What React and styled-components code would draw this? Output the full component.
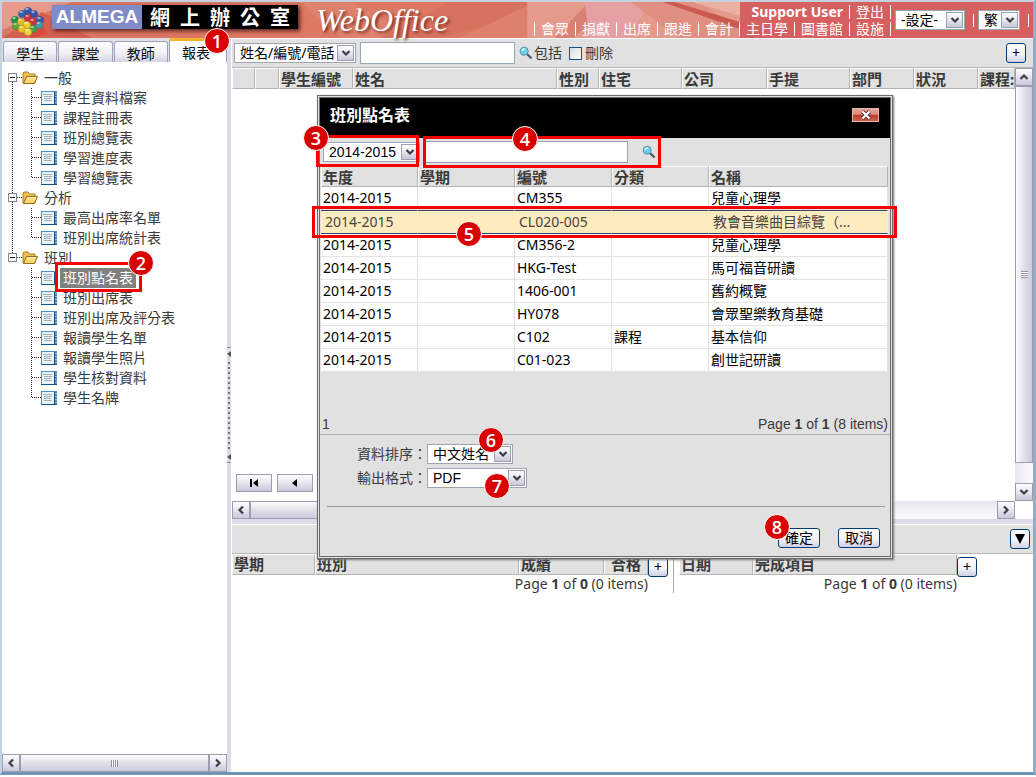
import styled, { createGlobalStyle, css } from "styled-components";

const students = ["", "", "學生編號", "姓名", "性別", "住宅", "公司", "手提", "部門", "狀況", "課程:"];
const studentCols = [23, 24, 74, 204, 42, 83, 85, 83, 64, 64];

const tree = [
  { title: "一般", items: ["學生資料檔案", "課程註冊表", "班別總覽表", "學習進度表", "學習總覽表"] },
  { title: "分析", items: ["最高出席率名單", "班別出席統計表"] },
  {
    title: "班別",
    items: ["班別點名表", "班別出席表", "班別出席及評分表", "報讀學生名單", "報讀學生照片", "學生核對資料", "學生名牌"],
  },
];

const classes = [
  { code: "CM355", type: "", name: "兒童心理學" },
  { code: "CL020-005", type: "", name: "教會音樂曲目綜覽（...", selected: true },
  { code: "CM356-2", type: "", name: "兒童心理學" },
  { code: "HKG-Test", type: "", name: "馬可福音研讀" },
  { code: "1406-001", type: "", name: "舊約概覽" },
  { code: "HY078", type: "", name: "會眾聖樂教育基礎" },
  { code: "C102", type: "課程", name: "基本信仰" },
  { code: "C01-023", type: "", name: "創世記研讀" },
];

function Logo() {
  const balls = [
    [26, 9, "#3b53a8"], [20, 12, "#2f63a8"], [32, 12, "#3b53a8"], [13, 18, "#2c8a49"],
    [38, 18, "#3f57b0"], [26, 16, "#d02e3c"], [14, 24, "#5aa83c"], [37, 23, "#3a9db0"],
    [19, 20, "#e0b92a"], [31, 20, "#c93742"], [25, 23, "#f0cf2a"], [20, 27, "#e8c321"], [31, 27, "#45a545"], [26, 30, "#efd23a"],
  ];
  return (
    <svg width="50" height="36" viewBox="0 0 50 36" aria-hidden="true">
      <path d="M24 30L40 22L46 32L30 36Z" fill="#d94b3c" />
      {balls.map(([x, y, fill]) => (
        <g key={`${x}-${y}`}>
          <circle cx={x} cy={y} r="3.8" fill={fill} stroke="#0003" strokeWidth="0.6" />
          <ellipse cx={x - 1} cy={y - 2} rx="1.8" ry="0.9" fill="#fff8" />
        </g>
      ))}
    </svg>
  );
}

function BannerArt() {
  return (
    <Art viewBox="0 0 742 36" preserveAspectRatio="none" aria-hidden="true">
      <rect width="742" height="36" fill="#dc7863" />
      <path d="M0 0H70L0 28Z" fill="#e79a8c" />
      <path d="M0 36L40 10L90 36Z" fill="#d4604f" />
      <path d="M300 0H350L420 36H340Z" fill="#de826e" />
      <path d="M380 36L450 0H528V12L440 36Z" fill="#d8715f" />
      <path d="M460 36L528 4V36Z" fill="#dd806c" />
      <rect x="528" width="214" height="36" fill="#e59a8c" />
      <path d="M556 36L590 0H612L575 36Z" fill="#d98273" />
      <path d="M586 0H650L632 36H590Z" fill="#e6a0a4" />
      <path d="M632 0H700L742 28V36H680Z" fill="#e08f82" />
      <path d="M664 0H676L742 20V27Z" fill="#cb5a4e" />
      <path d="M694 0H742V14Z" fill="#eab0a2" />
    </Art>
  );
}

function Chevron({ dir = "down" }) {
  const turn = { down: 0, left: 90, up: 180, right: 270 }[dir];
  return (
    <svg width="10" height="10" viewBox="0 0 10 10" aria-hidden="true">
      <path d="M1.5 3L5 6.5L8.5 3" fill="none" stroke="#3c3c46" strokeWidth="2.2" transform={`rotate(${turn} 5 5)`} />
    </svg>
  );
}

function Magnifier() {
  return (
    <svg width="14" height="14" viewBox="0 0 14 14" aria-hidden="true">
      <path d="M8 8L12.5 12.5" stroke="#4d5a66" strokeWidth="2.2" />
      <circle cx="5.2" cy="5.2" r="4" fill="#6fd0ee" stroke="#4f8fa8" />
      <path d="M3 5A2.5 2.5 0 0 1 6 3" stroke="#e6fbff" strokeWidth="1.4" fill="none" />
    </svg>
  );
}

function Folder() {
  return (
    <svg width="16" height="14" viewBox="0 0 16 14" aria-hidden="true">
      <path d="M1 12V2L2 1H6L7.5 3H13V12Z" fill="#eec051" stroke="#a98022" />
      <path d="M1.5 12.5L4.5 5.5H15.5L12.5 12.5Z" fill="#fbd567" stroke="#8a6d26" />
      <path d="M5.2 6.5H14M4.5 8H13.5" stroke="#ffeaa0" />
    </svg>
  );
}

function Report() {
  return (
    <svg width="16" height="14" viewBox="0 0 16 14" aria-hidden="true">
      <rect x="0.5" y="0.5" width="15" height="13" fill="#4288bd" stroke="#4a90c8" />
      <rect x="1" y="1" width="12" height="12" fill="#eef3f6" />
      <path d="M2 3.5H11M3 5.5H11M3 7.5H10M3 9.5H11" stroke="#a3afb9" />
      <path d="M0 13.5H16M13.5 1V13" stroke="#16517f" />
      <path d="M15 2V12" stroke="#d9efff" strokeDasharray="1 2" />
    </svg>
  );
}

// dotted connector lines in front of a tree row
function Guides({ child, first, last, lastGroup }) {
  return (
    <svg width={child ? 39 : 20} height="20" aria-hidden="true">
      <g fill="none" stroke="#222" strokeDasharray="1 1">
        {child && !lastGroup && <path d="M10.5 0V20" />}
        {child && <path d={last ? "M29.5 0V10" : "M29.5 0V20"} />}
        {child && <path d="M30 9.5H39" />}
        {!child && !first && <path d="M10.5 0V5" />}
        {!child && !lastGroup && <path d="M10.5 14V20" />}
        {!child && <path d="M15 9.5H20" />}
      </g>
      {!child && (
        <>
          <rect x="6.5" y="5.5" width="8" height="8" fill="#fff" stroke="#858585" />
          <path d="M8 9.5H13" stroke="#111" />
        </>
      )}
    </svg>
  );
}

function Dropdown({ label, value, width, arial }) {
  return (
    <SelectBox $width={width}>
      <Select aria-label={label} defaultValue={value} $arial={arial}>
        <option>{value}</option>
      </Select>
      <SelectArrow aria-hidden="true">
        <Chevron />
      </SelectArrow>
    </SelectBox>
  );
}

function ScrollBar({ vertical, thumb, grip, label }) {
  return (
    <Track $vertical={vertical} aria-label={label} role="group">
      <ScrollButton aria-label="Back"><Chevron dir={vertical ? "up" : "left"} /></ScrollButton>
      <Rail $vertical={vertical}>
        <Thumb $vertical={vertical} $size={thumb}>{grip && <Grip $vertical={vertical} />}</Thumb>
      </Rail>
      <ScrollButton aria-label="Forward"><Chevron dir={vertical ? "down" : "right"} /></ScrollButton>
    </Track>
  );
}

function Sidebar() {
  return (
    <Side>
      <Tabs>
        <Tab>學生</Tab>
        <Tab>課堂</Tab>
        <Tab>教師</Tab>
        <Tab $active>
          報表
          <Badge $top={-13} $left={34}>1</Badge>
        </Tab>
      </Tabs>
      <Tree>
        {tree.map((group, g) => {
          const lastGroup = g === tree.length - 1;
          return (
            <li key={group.title}>
              <TreeRow>
                <Guides first={g === 0} lastGroup={lastGroup} />
                <Folder />
                <TreeLabel href="#">{group.title}</TreeLabel>
              </TreeRow>
              {group.items.map((item, i) => {
                const current = item === "班別點名表";
                return (
                  <TreeRow key={item}>
                    <Guides child last={i === group.items.length - 1} lastGroup={lastGroup} />
                    <Report />
                    <TreeLabel href="#" $current={current}>{item}</TreeLabel>
                    {current && (
                      <Frame $top={-6} $left={53} $width={87} $height={30}>
                        <Badge $top={-15} $left={70}>2</Badge>
                      </Frame>
                    )}
                  </TreeRow>
                );
              })}
            </li>
          );
        })}
      </Tree>
      <ScrollBar label="Reports scroll" thumb="100%" grip />
    </Side>
  );
}

function ClassDialog() {
  return (
    <Dialog role="dialog" aria-label="班別點名表">
      <DialogTitle>
        <h2>班別點名表</h2>
        <CloseButton aria-label="Close">
          <svg width="12" height="10" viewBox="0 0 12 10" aria-hidden="true">
            <path d="M2.5 1.5L9.5 8.5M9.5 1.5L2.5 8.5" stroke="#5b3030" strokeWidth="4" />
            <path d="M2.5 1.5L9.5 8.5M9.5 1.5L2.5 8.5" stroke="#fff" strokeWidth="2.2" />
          </svg>
        </CloseButton>
      </DialogTitle>
      <DialogFilter>
        <Dropdown label="年度" value="2014-2015" width={97} arial />
        <FilterInput aria-label="搜尋班別" />
        <IconButton aria-label="搜尋"><Magnifier /></IconButton>
        <Frame $top={-3} $left={-4} $width={103} $height={32}>
          <Badge $top={-13} $left={-16}>3</Badge>
        </Frame>
        <Frame $top={-2} $left={103} $width={238} $height={32}>
          <Badge $top={-13} $left={86}>4</Badge>
        </Frame>
      </DialogFilter>
      <GridHolder>
        <Grid>
          <colgroup>
            <Col $w={97} /><Col $w={97} /><Col $w={97} /><Col $w={97} /><col />
          </colgroup>
          <thead>
            <tr><Th>年度</Th><Th>學期</Th><Th>編號</Th><Th>分類</Th><Th>名稱</Th></tr>
          </thead>
          <tbody>
            {classes.map((row) => (
              <Row key={row.code} $selected={row.selected}>
                <td>2014-2015</td>
                <td />
                <td>{row.code}</td>
                <td>{row.type}</td>
                <td>{row.name}</td>
              </Row>
            ))}
          </tbody>
        </Grid>
        <Frame $top={40} $left={-8} $width={585} $height={32}>
          <Badge $top={12} $left={141}>5</Badge>
        </Frame>
      </GridHolder>
      <DialogPager>
        <span>1</span>
        <span>Page <b>1</b> of <b>1</b> (8 items)</span>
      </DialogPager>
      <Options>
        <Option>
          資料排序：
          <Anchor>
            <Dropdown label="資料排序" value="中文姓名" width={86} />
            <Badge $top={-17} $left={51}>6</Badge>
          </Anchor>
        </Option>
        <Option>
          輸出格式：
          <Anchor>
            <Dropdown label="輸出格式" value="PDF" width={100} arial />
            <Badge $top={5} $left={57}>7</Badge>
          </Anchor>
        </Option>
      </Options>
      <Actions>
        <PushButton>
          確定
          <Badge $top={-15} $left={-15}>8</Badge>
        </PushButton>
        <PushButton>取消</PushButton>
      </Actions>
    </Dialog>
  );
}

export default function App() {
  return (
    <Page>
      <GlobalStyle />
      <Header>
        <Banner>
          <BannerArt />
          <Logo />
          <Brand>
            <Almega>ALMEGA</Almega>
            <BrandName>{"網\u2002上\u2002辦\u2002公\u2002室"}</BrandName>
          </Brand>
          <Product>WebOffice</Product>
          <Nav>
            {["會眾", "捐獻", "出席", "跟進", "會計"].map((link) => (
              <BarLink href="#" key={link}>{link}</BarLink>
            ))}
          </Nav>
        </Banner>
        <Account>
          <AccountLinks>
            <p><BarLink href="#"><b>Support User</b></BarLink><BarLink href="#">登出</BarLink></p>
            <p><BarLink href="#">主日學</BarLink><BarLink href="#">圖書館</BarLink><BarLink href="#">設施</BarLink></p>
          </AccountLinks>
          <Dropdown label="設定" value="-設定-" width={70} />
          <Pipe />
          <Dropdown label="語言" value="繁" width={42} />
          <Pipe />
        </Account>
      </Header>

      <Main>
        <Sidebar />
        <Splitter>
          <svg width="4" height="116" viewBox="0 0 4 116" aria-hidden="true">
            <path d="M0 .5H4M0 115.5H4" stroke="#8a8a9a" />
            <path d="M4 4V10L0 7ZM4 107V113L0 110Z" fill="#555" />
            <path d="M2 15V102" stroke="#77778a" strokeWidth="2" strokeDasharray="2 3" />
          </svg>
        </Splitter>
        <Work>
          <Toolbar>
            <Dropdown label="搜尋欄位" value="姓名/編號/電話" width={122} />
            <SearchInput aria-label="搜尋" />
            <Magnifier />
            <span>包括</span>
            <Check>
              <input type="checkbox" />
              刪除
            </Check>
            <SquareButton aria-label="新增學生">+</SquareButton>
          </Toolbar>
          <Upper>
            <UpperBody>
              <UpperMain>
                <Grid>
                  <colgroup>
                    {studentCols.map((w, i) => <Col key={i} $w={w} />)}
                    <col />
                  </colgroup>
                  <thead>
                    <tr>{students.map((name, i) => <Th key={i}>{name}</Th>)}</tr>
                  </thead>
                </Grid>
                <RecordNav>
                  <NavButton aria-label="First">
                    <svg width="10" height="8" viewBox="0 0 10 8"><path d="M1 0H3V8H1ZM9 0V8L4 4Z" /></svg>
                  </NavButton>
                  <NavButton aria-label="Previous">
                    <svg width="10" height="8" viewBox="0 0 10 8"><path d="M7 0V8L2 4Z" /></svg>
                  </NavButton>
                </RecordNav>
              </UpperMain>
              <ScrollBar vertical label="Students scroll vertical" thumb="95%" grip />
            </UpperBody>
            <HorizontalScroll>
              <ScrollBar label="Students scroll" thumb="60%" />
            </HorizontalScroll>
          </Upper>
          <RowSplitter />
          <Lower>
            <LowerBar>
              <SquareButton aria-label="展開">
                <svg width="10" height="10" viewBox="0 0 10 10" aria-hidden="true"><path d="M0 0H10L5 10Z" /></svg>
              </SquareButton>
            </LowerBar>
            <Details>
              <Detail>
                <DetailGrid $width={416}>
                  <Grid>
                    <colgroup><Col $w={83} /><Col $w={204} /><Col $w={85} /><col /></colgroup>
                    <thead>
                      <tr><Th>學期</Th><Th>班別</Th><Th>成績</Th><Th $center>合格</Th></tr>
                    </thead>
                  </Grid>
                  <Pager>Page <b>1</b> of <b>0</b> (0 items)</Pager>
                </DetailGrid>
                <SquareButton aria-label="新增成績">+</SquareButton>
              </Detail>
              <Detail>
                <DetailGrid $width={278}>
                  <Grid>
                    <colgroup><Col $w={74} /><col /></colgroup>
                    <thead>
                      <tr><Th>日期</Th><Th>完成項目</Th></tr>
                    </thead>
                  </Grid>
                  <Pager>Page <b>1</b> of <b>0</b> (0 items)</Pager>
                </DetailGrid>
                <SquareButton aria-label="新增項目">+</SquareButton>
              </Detail>
            </Details>
          </Lower>
        </Work>
      </Main>
      <ClassDialog />
    </Page>
  );
}

const GlobalStyle = createGlobalStyle`
  * {
    box-sizing: border-box;
  }
  body {
    margin: 0;
    background: #fff;
  }
  body, button, input, select {
    font-family: "Noto Sans", "Noto Sans CJK TC", sans-serif;
    font-size: 14px;
    line-height: 20px;
    color: #3a3a3a;
  }
  h1, h2, p, ul {
    margin: 0;
    padding: 0;
  }
  svg {
    flex: none;
    display: block;
  }
`;

const Page = styled.div`
  position: relative;
  height: calc(100vh - 2px);
  min-height: 640px;
  display: flex;
  flex-direction: column;
  border: 2px solid #c3d2de;
  border-right: 3px solid #93aec4;
  border-bottom: 3px solid #7096b4;
  overflow: hidden;
`;

const Header = styled.header`
  display: flex;
  flex: none;
  height: 36px;
  color: #fff;
`;

const Banner = styled.div`
  position: relative;
  flex: 1;
  display: flex;
  align-items: center;
  min-width: 0;
  > * {
    position: relative;
  }
`;

const Art = styled.svg`
  && {
    position: absolute;
    inset: 0;
    width: 100%;
    height: 100%;
  }
`;

const Brand = styled.div`
  display: flex;
  align-self: flex-start;
  margin-top: 3px;
  height: 24px;
  line-height: 24px;
  box-shadow: 2px 2px 4px #5a2020;
`;

const Almega = styled.span`
  width: 90px;
  text-align: center;
  background: #7f8cc8;
  font-family: "Liberation Sans", Arial, sans-serif;
  font-size: 19px;
  font-weight: bold;
`;

const BrandName = styled.span`
  width: 156px;
  text-align: center;
  background: #000;
  font-family: "Noto Sans CJK TC", sans-serif;
  font-size: 20px;
  font-weight: bold;
  white-space: pre;
`;

const Product = styled.h1`
  margin-left: 18px;
  font-family: "Liberation Serif", "Times New Roman", serif;
  font-size: 32px;
  line-height: 36px;
  font-style: italic;
  font-weight: normal;
  text-shadow: 2px 2px 3px #7a3025;
`;

const BarLink = styled.a`
  padding: 0 6px;
  border-right: 1px solid #fff;
  color: #fff;
  text-decoration: none;
`;

const Nav = styled.nav`
  display: flex;
  align-self: flex-end;
  margin: 0 0 2px auto;
  line-height: 14px;
  white-space: nowrap;
  border-left: 1px solid #fff;
`;

const Account = styled.div`
  display: flex;
  flex: none;
  align-items: center;
  background: #d66060;
`;

const AccountLinks = styled.div`
  display: flex;
  flex-direction: column;
  gap: 3px;
  margin-right: 4px;
  line-height: 14px;
  p {
    display: flex;
    justify-content: flex-end;
  }
`;

const Pipe = styled.span`
  height: 13px;
  margin: 0 4px 0 8px;
  border-left: 1px solid #fff;
`;

const SelectBox = styled.span`
  display: flex;
  flex: none;
  width: ${({ $width }) => $width}px;
  height: 20px;
  padding: 1px;
  border: 1px solid #9da4b2;
  background: #fff;
`;

const Select = styled.select`
  appearance: none;
  flex: 1;
  min-width: 0;
  padding: 0 0 0 4px;
  border: none;
  background: none;
  line-height: 16px;
  color: #000;
  ${({ $arial }) => $arial && css`
    font-family: "Liberation Sans", Arial, sans-serif;
  `}
`;

const face = css`
  display: flex;
  align-items: center;
  justify-content: center;
  padding: 0;
  border: 1px solid #9b9db0;
  background: linear-gradient(#fdfdff, #e8e8f0 45%, #c8c8da);
`;

const SelectArrow = styled.span`
  ${face}
  width: 17px;
  flex: none;
  pointer-events: none;
`;

const ScrollButton = styled.button`
  ${face}
  width: 18px;
  height: 18px;
  flex: none;
`;

const Track = styled.div`
  display: flex;
  flex: none;
  flex-direction: ${({ $vertical }) => ($vertical ? "column" : "row")};
`;

const Rail = styled.div`
  flex: 1;
  display: flex;
  min-width: 0;
  min-height: 0;
  flex-direction: ${({ $vertical }) => ($vertical ? "column" : "row")};
  background: linear-gradient(${({ $vertical }) => ($vertical ? "90deg" : "180deg")}, #e7e7ef, #fbfbfe);
`;

const Thumb = styled.div`
  display: flex;
  align-items: center;
  justify-content: center;
  flex: 0 0 ${({ $size }) => $size};
  border: 1px solid #9b9db0;
  background: linear-gradient(${({ $vertical }) => ($vertical ? "90deg" : "180deg")}, #fbfbfd, #dcdce6 60%, #c9c9db);
`;

const Grip = styled.span`
  width: 7px;
  height: 7px;
  background: repeating-linear-gradient(
    ${({ $vertical }) => ($vertical ? "180deg" : "90deg")},
    #8c93a6 0 1px,
    #fff 1px 2px
  );
`;

const Main = styled.main`
  flex: 1;
  display: flex;
  min-height: 0;
`;

const Side = styled.aside`
  flex: none;
  width: 225px;
  display: flex;
  flex-direction: column;
`;

const Tabs = styled.div`
  display: flex;
  align-items: flex-end;
  gap: 1px;
  height: 24px;
  padding-left: 1px;
  background: #e1e1e1;
  margin-bottom: 6px;
`;

const Tab = styled.button`
  position: relative;
  flex: 1;
  height: 21px;
  padding: 3px 0 0;
  border: 1px solid #9a9fc0;
  border-bottom: none;
  border-radius: 3px 3px 0 0;
  background: linear-gradient(#fff, #f0f0f6 55%, #d3d3e2);
  line-height: 18px;
  color: #111;
  ${({ $active }) => $active && css`
    flex: 0 0 58px;
    height: 24px;
    padding-right: 4px;
    border-top: 3px solid #f5b12e;
    background: #fff;
  `}
`;

const Tree = styled.ul`
  flex: 1;
  min-height: 0;
  overflow: hidden;
  list-style: none;
`;

const TreeRow = styled.div`
  position: relative;
  display: flex;
  align-items: center;
  height: 20px;
`;

const TreeLabel = styled.a`
  margin-left: 3px;
  padding: 0 3px;
  line-height: 20px;
  color: #3a3a3a;
  text-decoration: none;
  ${({ $current }) => $current && css`
    color: #fff;
    background: #808080;
  `}
`;

const Frame = styled.div`
  position: absolute;
  z-index: 2;
  top: ${({ $top }) => $top}px;
  left: ${({ $left }) => $left}px;
  width: ${({ $width }) => $width}px;
  height: ${({ $height }) => $height}px;
  border: 3px solid #f80000;
  pointer-events: none;
`;

const Badge = styled.span`
  position: absolute;
  z-index: 3;
  top: ${({ $top }) => $top}px;
  left: ${({ $left }) => $left}px;
  width: 26px;
  height: 26px;
  border: 1px solid #fff;
  border-radius: 50%;
  background: #d80000;
  color: #fff;
  font-family: "Open Sans", sans-serif;
  font-size: 18px;
  font-weight: 600;
  line-height: 24px;
  text-align: center;
`;

const Splitter = styled.div`
  flex: none;
  width: 4px;
  display: flex;
  align-items: center;
  justify-content: center;
  background: #dcdce9;
`;

const Work = styled.section`
  flex: 1;
  min-width: 0;
  display: flex;
  flex-direction: column;
  padding-left: 1px;
`;

const Toolbar = styled.div`
  display: flex;
  align-items: center;
  flex: none;
  height: 30px;
  padding: 0 7px 0 2px;
  border-top: 1px solid #fff;
  border-bottom: 1px solid #b5b5b5;
  background: #e1e1e1;
  > svg {
    margin: 0 1px 0 4px;
  }
  > button {
    margin-left: auto;
  }
`;

const field = css`
  height: 22px;
  padding: 0 4px;
  border: 1px solid #9aa7b4;
  background: #fff;
`;

const SearchInput = styled.input`
  ${field}
  width: 155px;
  margin-left: 4px;
`;

const Check = styled.label`
  display: flex;
  align-items: center;
  gap: 3px;
  margin-left: 7px;
  input {
    appearance: none;
    width: 13px;
    height: 13px;
    margin: 0;
    border: 1px solid #1c5180;
    background: linear-gradient(135deg, #dcdcd7, #fff);
  }
`;

const SquareButton = styled.button`
  flex: none;
  display: flex;
  align-items: center;
  justify-content: center;
  width: 20px;
  height: 20px;
  padding: 0;
  border: 1px solid #003c74;
  border-radius: 3px;
  background: linear-gradient(#fff, #f0f0f8 60%, #cfcfe6);
  color: #000;
`;

const Upper = styled.div`
  flex: 20 1 0;
  display: flex;
  flex-direction: column;
  min-height: 0;
`;

const UpperBody = styled.div`
  flex: 1;
  display: flex;
  min-height: 0;
`;

const UpperMain = styled.div`
  flex: 1;
  min-width: 0;
  display: flex;
  flex-direction: column;
`;

const HorizontalScroll = styled.div`
  flex: none;
  padding-right: 18px;
`;

const Grid = styled.table`
  width: 100%;
  table-layout: fixed;
  border-collapse: separate;
  border-spacing: 0;
`;

const Col = styled.col`
  width: ${({ $w }) => $w}px;
`;

const Th = styled.th`
  height: 21px;
  padding: 0 1px;
  border: 1px solid #b3b3b3;
  border-left-color: #fff;
  border-top-color: #fff;
  background: #e1e1e1;
  font-size: 15px;
  font-weight: bold;
  line-height: 18px;
  text-align: ${({ $center }) => ($center ? "center" : "left")};
  white-space: nowrap;
  overflow: hidden;
`;

const RecordNav = styled.div`
  display: flex;
  gap: 5px;
  margin-top: auto;
  padding: 0 4px 9px;
`;

const NavButton = styled.button`
  ${face}
  width: 36px;
  height: 18px;
`;

const RowSplitter = styled.div`
  flex: none;
  height: 5px;
  background: #dcdce9;
`;

const Lower = styled.div`
  flex: 11 1 0;
  min-height: 0;
`;

const LowerBar = styled.div`
  display: flex;
  align-items: center;
  justify-content: flex-end;
  height: 30px;
  padding-right: 3px;
  border-top: 1px solid #fff;
  border-bottom: 1px solid #b5b5b5;
  background: #e1e1e1;
`;

const Details = styled.div`
  display: flex;
`;

const Detail = styled.div`
  display: flex;
  padding-right: 5px;
  > button {
    margin-top: 3px;
  }
  & + & {
    padding-left: 5px;
    border-left: 1px solid #aaa;
  }
`;

const DetailGrid = styled.div`
  width: ${({ $width }) => $width}px;
`;

const Pager = styled.p`
  line-height: 18px;
  text-align: right;
`;

const Dialog = styled.section`
  position: absolute;
  z-index: 1;
  top: 93px;
  left: 315px;
  width: 576px;
  border: 3px double #6a6d70;
  background: #e1e1e1;
  box-shadow: 1px 1px 2px #777;
`;

const DialogTitle = styled.header`
  display: flex;
  align-items: center;
  justify-content: space-between;
  height: 40px;
  padding: 0 11px 6px 10px;
  background: #000;
  color: #fff;
  h2 {
    font-size: 16px;
    line-height: 24px;
    font-weight: bold;
  }
`;

const CloseButton = styled.button`
  display: flex;
  align-items: center;
  justify-content: center;
  width: 27px;
  height: 14px;
  padding: 0;
  border: 1px solid #e4b5ac;
  background: linear-gradient(#e7a598, #dc8578 45%, #b53b26 50%, #d0624c);
`;

const DialogFilter = styled.div`
  position: relative;
  display: flex;
  align-items: center;
  height: 28px;
  padding-left: 3px;
`;

const FilterInput = styled.input`
  ${field}
  width: 204px;
  margin-left: 4px;
`;

const IconButton = styled.button`
  margin-left: 12px;
  padding: 0 2px;
  border: none;
  background: none;
`;

const GridHolder = styled.div`
  position: relative;
  padding: 0 2px 0 1px;
`;

const Row = styled.tr`
  td {
    height: 23px;
    padding: 0 0 0 2px;
    border-right: 1px solid #e3e3e0;
    border-bottom: 1px solid #e3e3e0;
    background: #fff;
    color: #000;
    line-height: 22px;
    white-space: nowrap;
  }
  ${({ $selected }) => $selected && css`
    td {
      height: 24px;
      padding-left: 4px;
      border-top: 1px solid #35446f;
      border-bottom: 1px solid #35446f;
      border-right-color: #ffebbd;
      background: #ffebbd;
      color: #444;
    }
  `}
`;

const DialogPager = styled.div`
  display: flex;
  justify-content: space-between;
  margin-top: 42px;
  padding: 0 2px;
  border-bottom: 1px solid #b0b0b0;
  font-family: "Liberation Sans", Arial, sans-serif;
`;

const Options = styled.div`
  display: flex;
  flex-direction: column;
  gap: 4px;
  margin: 0 5px 0 7px;
  padding: 9px 0 18px 30px;
  border-bottom: 1px solid #999;
`;

const Option = styled.div`
  display: flex;
`;

const Anchor = styled.div`
  position: relative;
`;

const Actions = styled.div`
  display: flex;
  justify-content: flex-end;
  gap: 18px;
  padding: 21px 10px 8px;
`;

const PushButton = styled.button`
  position: relative;
  width: 42px;
  height: 20px;
  padding: 0;
  border: 1px solid #003c74;
  border-radius: 3px;
  background: linear-gradient(#fff, #f0f0f8 60%, #cfcfe6);
  line-height: 18px;
  color: #000;
`;
